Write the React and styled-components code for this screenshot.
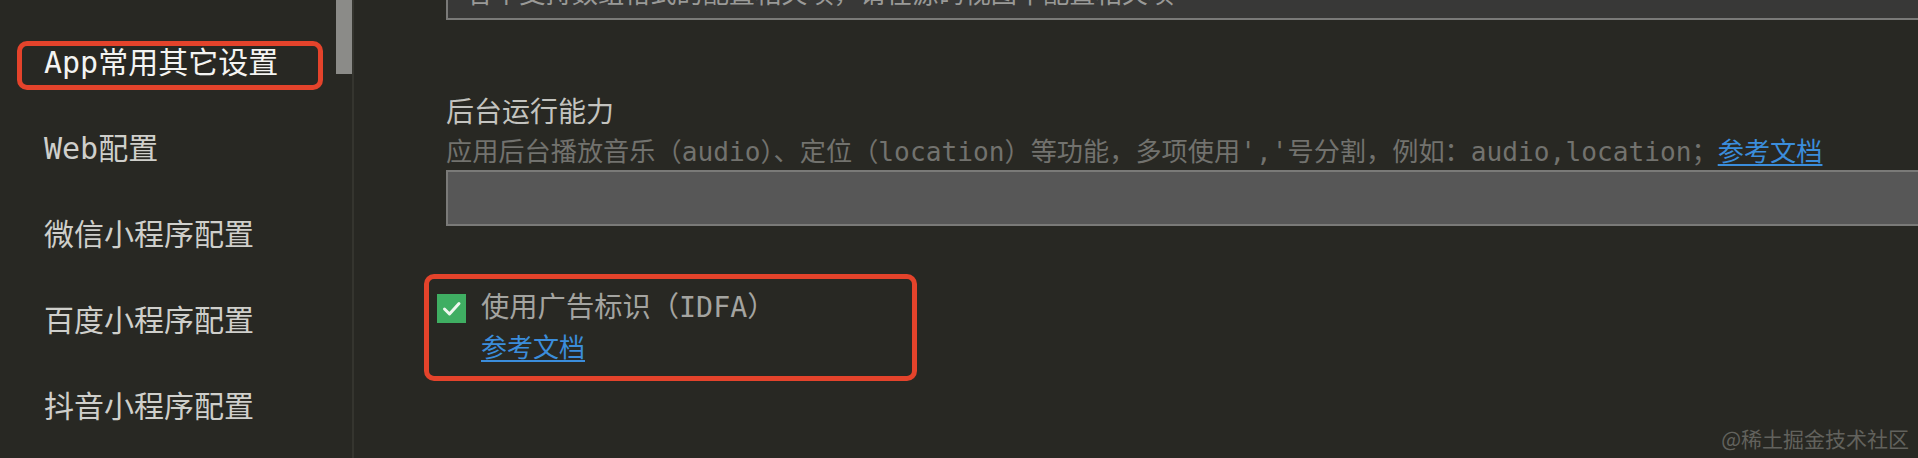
import React from 'react';
import styled, { createGlobalStyle, css } from 'styled-components';

const GlobalStyle = createGlobalStyle`
  html, body {
    margin: 0;
    padding: 0;
    background: #282823;
  }
`;

const FONT = `"DejaVu Sans Mono", "Noto Sans CJK SC", monospace`;

const Page = styled.div`
  position: relative;
  display: flex;
  width: 1918px;
  height: 458px;
  overflow: hidden;
  background: #282823;
  font-family: ${FONT};
`;

const Sidebar = styled.aside`
  display: flex;
  width: 352px;
  flex-shrink: 0;
  border-right: 2px solid #35352f;
`;

const NavList = styled.ul`
  list-style: none;
  margin: 0;
  padding: 20px 0 0;
  width: 336px;
`;

const NavItem = styled.li`
  position: relative;
  display: flex;
  align-items: center;
  height: 86px;
  padding-left: 44px;
  font-size: 30px;
  line-height: 1;
  color: ${props => (props.$active ? '#f4f4f2' : '#cfcfcb')};

  ${props =>
    props.$marked &&
    css`
      &::after {
        content: '';
        position: absolute;
        left: 17px;
        top: 21px;
        width: 306px;
        height: 49px;
        box-sizing: border-box;
        border: 5px solid #e4432b;
        border-radius: 10px;
      }
    `}
`;

const ScrollTrack = styled.div`
  width: 16px;
`;

const ScrollThumb = styled.div`
  height: 74px;
  background: #8b8b88;
`;

const Main = styled.main`
  flex: 1;
  min-width: 0;
  display: flex;
  flex-direction: column;
  margin-top: -36px;
  padding-left: 92px;
`;

const TextInput = styled.div`
  display: flex;
  align-items: center;
  height: 56px;
  box-sizing: border-box;
  margin-right: -6px;
  padding-left: 19px;
  border: 2px solid #7a7a78;
  background: ${props => (props.$filled ? '#575757' : '#383837')};
  color: #9a9a98;
  font-size: 26.2px;
  white-space: nowrap;
  overflow: hidden;
`;

const FieldLabel = styled.div`
  margin-top: ${props => props.$gap || 0}px;
  font-size: 28px;
  line-height: 34px;
  color: #c3c3bf;
`;

const FieldDesc = styled.div`
  margin-top: 6px;
  margin-bottom: 2px;
  font-size: 26.2px;
  line-height: 32px;
  color: #72726e;
  white-space: nowrap;
`;

const DocLink = styled.a`
  color: #3b8ddb;
  text-decoration: underline;
  text-underline-offset: 3px;
  text-decoration-thickness: 2px;
  cursor: pointer;
`;

const CheckRow = styled.div`
  position: relative;
  display: flex;
  align-items: flex-start;
  gap: 15px;
  margin-top: 65px;
  margin-left: -9px;

  &::after {
    content: '';
    position: absolute;
    left: -13px;
    top: -17px;
    width: 493px;
    height: 107px;
    box-sizing: border-box;
    border: 5px solid #e4432b;
    border-radius: 10px;
  }
`;

const CheckBox = styled.span`
  display: flex;
  align-items: center;
  justify-content: center;
  width: 29px;
  height: 29px;
  margin-top: 3px;
  background: #3fae62;
  flex-shrink: 0;
`;

const CheckText = styled.div`
  display: flex;
  flex-direction: column;
`;

const CheckLabel = styled.div`
  font-size: 28.3px;
  line-height: 34px;
  color: #a4a4a0;
`;

const CheckLink = styled(DocLink)`
  margin-top: 8px;
  font-size: 26px;
  line-height: 30px;
  align-self: flex-start;
`;

const Watermark = styled.div`
  position: absolute;
  right: 9px;
  bottom: 8px;
  font-family: "Noto Sans CJK SC", sans-serif;
  font-size: 21px;
  line-height: 24px;
  color: #62625d;
`;

const navItems = ['App常用其它设置', 'Web配置', '微信小程序配置', '百度小程序配置', '抖音小程序配置'];

export default function App() {
  return (
    <>
      <GlobalStyle />
      <Page>
        <Sidebar>
          <NavList>
            {navItems.map((item, i) => (
              <NavItem key={item} $active={i === 0} $marked={i === 0}>
                {item}
              </NavItem>
            ))}
          </NavList>
          <ScrollTrack>
            <ScrollThumb />
          </ScrollTrack>
        </Sidebar>

        <Main>
          <TextInput>各个支持数组格式的配置相关项，请在源码视图中配置相关项</TextInput>

          <FieldLabel $gap={76}>后台运行能力</FieldLabel>
          <FieldDesc>
            应用后台播放音乐（audio）、定位（location）等功能，多项使用','号分割，例如：audio,location；
            <DocLink>参考文档</DocLink>
          </FieldDesc>
          <TextInput $filled />

          <CheckRow>
            <CheckBox>
              <svg width="29" height="29" viewBox="0 0 29 29">
                <path d="M7.5 15 L12.5 20 L22 9.5" fill="none" stroke="#eef7ee" strokeWidth="3" strokeLinecap="round" strokeLinejoin="round" />
              </svg>
            </CheckBox>
            <CheckText>
              <CheckLabel>使用广告标识（IDFA）</CheckLabel>
              <CheckLink>参考文档</CheckLink>
            </CheckText>
          </CheckRow>
        </Main>

        <Watermark>@稀土掘金技术社区</Watermark>
      </Page>
    </>
  );
}
